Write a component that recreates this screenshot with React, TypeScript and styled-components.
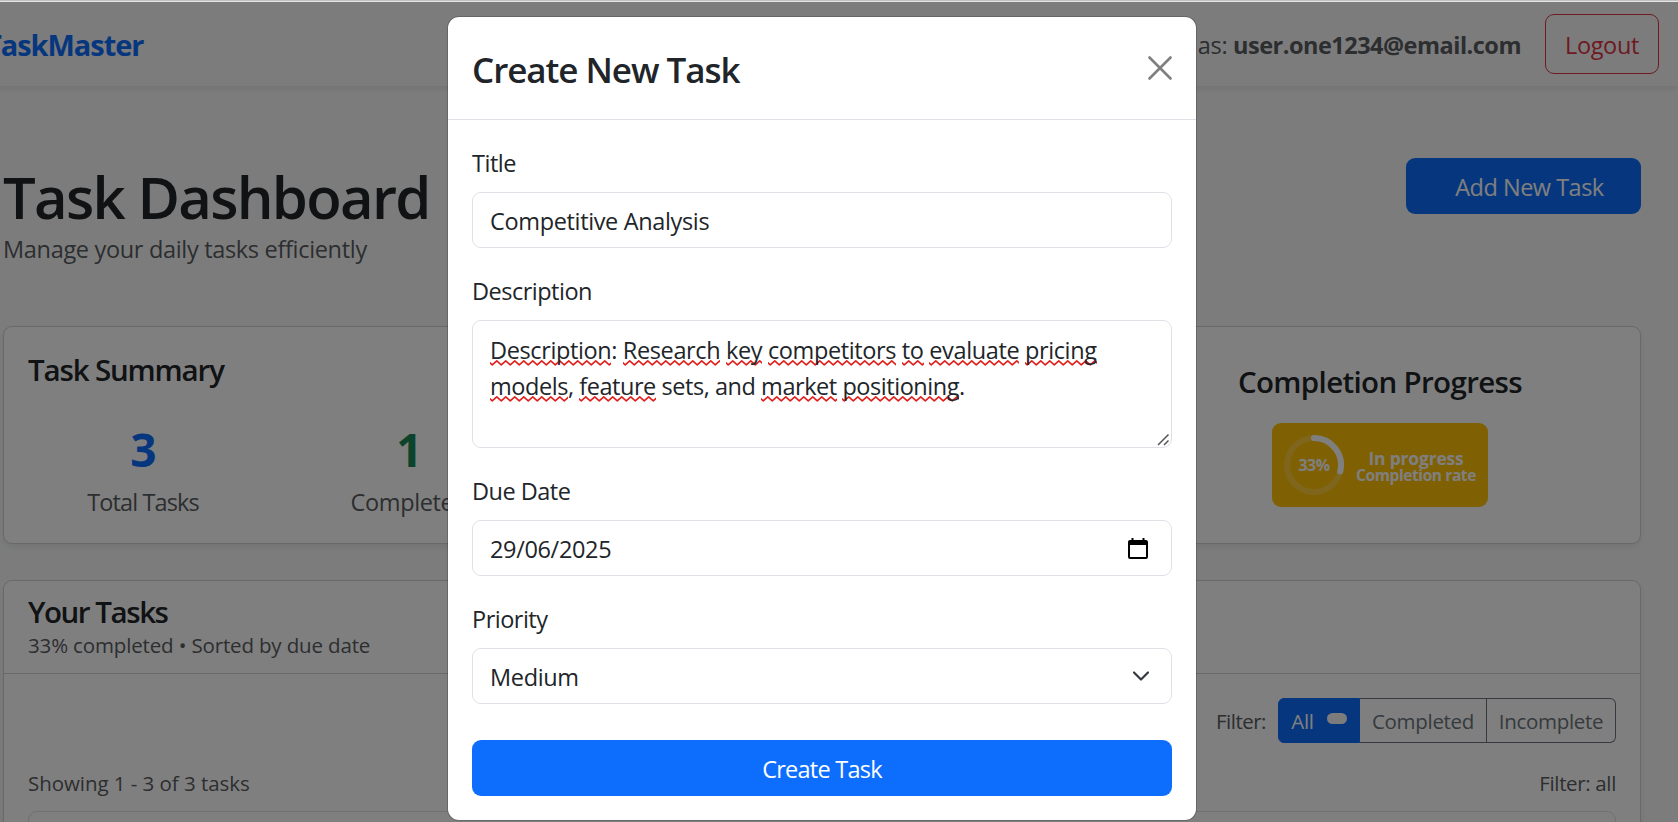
import React from "react";
import styled, { createGlobalStyle, css } from "styled-components";

const Global = createGlobalStyle`
  *, *::before, *::after { box-sizing: border-box; }
  html, body { margin: 0; padding: 0; height: 100%; overflow: hidden; }
  body {
    font-family: "Segoe UI", "Open Sans", "Noto Sans", sans-serif;
    font-size: 23.5px;
    line-height: 36px;
    letter-spacing: -0.35px;
    color: #212529;
    background: #f8f9fa;
  }
  h1, h2, h3, p { margin: 0; }
  button { font: inherit; letter-spacing: inherit; cursor: pointer; }
`;

const TopEdge = styled.div`
  height: 2px;
  background: #e6e6e6;
  border-top: 1px solid #c0c0c0;
`;

const Viewport = styled.div`
  position: relative;
  height: calc(100vh - 2px);
  overflow: hidden;
`;

const Page = styled.div`
  width: 1712px;
  margin-left: -34px;
`;

const Navbar = styled.header`
  display: flex;
  align-items: center;
  height: 84px;
  padding: 0 19px;
  background: #f8f9fa;
  box-shadow: 0 3px 6px rgba(0, 0, 0, 0.075);
`;

const Brand = styled.span`
  padding-top: 2px;
  font-size: 29px;
  font-weight: 700;
  letter-spacing: -1.05px;
  color: #0d6efd;
`;

const Account = styled.span`
  margin-left: auto;
  margin-right: 24px;
  padding-top: 2px;
  color: #595c5f;
  strong { font-weight: 700; letter-spacing: -0.5px; }
`;

const LogoutButton = styled.button`
  width: 114px;
  height: 60px;
  padding: 1px 0 0;
  border: 1.5px solid #dc3545;
  border-radius: 9px;
  background: transparent;
  color: #dc3545;
`;

const Container = styled.main`
  width: 1638px;
  margin: 0 auto;
  padding-top: 72px;
`;

const PageHeader = styled.div`
  display: flex;
  justify-content: space-between;
  align-items: flex-start;
  height: 168px;
`;

const PageTitle = styled.h1`
  padding-top: 3px;
  font-size: 58px;
  font-weight: 600;
  line-height: 72px;
  letter-spacing: -1.7px;
`;

const PageSubtitle = styled.p`
  margin-top: -2px;
  letter-spacing: -0.32px;
  color: #595c5f;
`;

const primary = css`
  border: 0;
  border-radius: 9px;
  background: #0d6efd;
  color: #fff;
`;

const AddButton = styled.button`
  ${primary}
  width: 235px;
  height: 56px;
  padding: 2px 0 0 12px;
  letter-spacing: -0.5px;
`;

const Card = styled.section`
  border: 1px solid #d2d3d4;
  border-radius: 9px;
  background: #fff;
  box-shadow: 0 3px 6px rgba(0, 0, 0, 0.075);
`;

const SummaryCard = styled(Card)`
  display: grid;
  grid-template-columns: 1076px 1fr;
  height: 218px;
  margin-bottom: 36px;
  padding-top: 24px;
`;

const CardTitle = styled.h2<{ $track?: number }>`
  height: 36px;
  font-size: 29.5px;
  font-weight: 600;
  line-height: 38px;
  letter-spacing: ${(p) => p.$track ?? -1}px;
`;

const Summary = styled.div`
  padding-left: 24px;
`;

const Stats = styled.div`
  display: grid;
  grid-template-columns: repeat(3, 266px);
  margin: 33px 0 0 -18px;
  text-align: center;
`;

const StatValue = styled.div<{ $color: string }>`
  font-size: 46px;
  font-weight: 700;
  line-height: 58px;
  letter-spacing: -1px;
  color: ${(p) => p.$color};
`;

const StatLabel = styled.div<{ $track?: number }>`
  margin-top: 6px;
  letter-spacing: ${(p) => p.$track ?? -0.35}px;
  color: #595c5f;
`;

const Progress = styled.div`
  display: flex;
  flex-direction: column;
  align-items: center;
  width: 600px;
  padding-top: 12px;
`;

const ProgressBadge = styled.div`
  display: flex;
  align-items: center;
  width: 216px;
  height: 84px;
  margin-top: 24px;
  padding: 0 12px;
  border-radius: 9px;
  background: #ffc107;
  color: #fff;
  font-weight: 700;
`;

const Ring = styled.div`
  display: grid;
  place-items: center;
  width: 60px;
  height: 60px;
  > * { grid-area: 1 / 1; }
  span { font-size: 16px; line-height: 20px; letter-spacing: -0.5px; }
`;

const RateText = styled.div`
  flex: 1;
  padding: 2px 0 0 12px;
  font-size: 17.5px;
  font-weight: 700;
  line-height: 17px;
  letter-spacing: -0.2px;
  text-align: center;
  white-space: nowrap;
  small { display: block; font-size: 15.5px; line-height: 16px; letter-spacing: -0.4px; }
`;

const TasksCard = styled(Card)`
  height: 400px;
`;

const TasksHeader = styled.div`
  height: 93px;
  padding: 12px 24px 0;
  border-bottom: 1px solid #d2d3d4;
`;

const Muted = styled.p<{ $track?: number }>`
  font-size: 20.5px;
  line-height: 32px;
  letter-spacing: ${(p) => p.$track ?? -0.15}px;
  color: #595c5f;
`;

const FilterRow = styled.div`
  display: flex;
  justify-content: flex-end;
  align-items: center;
  gap: 12px;
  padding: 24px 24px 0;
`;

const FilterGroup = styled.div`
  display: flex;
  height: 45px;
`;

const FilterButton = styled.button<{ $active?: boolean; $width: number }>`
  display: flex;
  align-items: center;
  justify-content: center;
  gap: 13px;
  width: ${(p) => p.$width}px;
  padding: 0;
  border: 1px solid ${(p) => (p.$active ? "#0d6efd" : "#6c757d")};
  border-left-width: ${(p) => (p.$active ? 1 : 0)}px;
  background: ${(p) => (p.$active ? "#0d6efd" : "transparent")};
  color: ${(p) => (p.$active ? "#fff" : "#6c757d")};
  font-size: 20.5px;
  letter-spacing: -0.3px;
  &:first-child { border-radius: 6px 0 0 6px; }
  &:last-child { border-radius: 0 6px 6px 0; }
`;

const Pill = styled.span`
  width: 20px;
  height: 11px;
  margin-top: -4px;
  border-radius: 6px;
  background: #f8f9fa;
`;

const ListInfo = styled.div`
  display: flex;
  justify-content: space-between;
  padding: 24px 24px 0;
`;

const TaskList = styled.div`
  height: 200px;
  margin: 12px 24px 0;
  border: 1px solid #dee2e6;
  border-radius: 9px;
`;

const Backdrop = styled.div`
  position: absolute;
  inset: 0 0 0 -34px;
  display: flex;
  justify-content: center;
  align-items: flex-start;
  padding-top: 14px;
  background: rgba(0, 0, 0, 0.5);
`;

const Dialog = styled.div`
  width: 750px;
  border: 1px solid rgba(0, 0, 0, 0.175);
  border-radius: 12px;
  background: #fff;
  background-clip: padding-box;
`;

const DialogHeader = styled.div`
  display: flex;
  justify-content: space-between;
  align-items: flex-start;
  height: 103px;
  padding: 26px 24px 0;
  border-bottom: 1px solid #dee2e6;
`;

const DialogTitle = styled.h2`
  font-size: 35px;
  font-weight: 600;
  line-height: 54px;
  letter-spacing: -1.05px;
`;

const CloseButton = styled.button`
  display: flex;
  margin-top: 13px;
  padding: 0;
  border: 0;
  background: none;
  color: #7f7f7f;
`;

const DialogBody = styled.form`
  display: flex;
  flex-direction: column;
  gap: 24px;
  padding: 24px;
`;

const Field = styled.div`
  display: flex;
  flex-direction: column;
  gap: 12px;
`;

const Label = styled.label`
  height: 36px;
  padding-top: 1px;
  letter-spacing: -0.5px;
`;

const Control = styled.div<{ $area?: boolean }>`
  position: relative;
  display: flex;
  justify-content: space-between;
  align-items: ${(p) => (p.$area ? "flex-start" : "center")};
  height: ${(p) => (p.$area ? 128 : 56)}px;
  padding: ${(p) => (p.$area ? "11px 17px 0" : "2px 22px 0 17px")};
  border: 1px solid #dee2e6;
  border-radius: 9px;
  background: #fff;
`;

const AreaText = styled.p<{ $track: number }>`
  letter-spacing: ${(p) => p.$track}px;
  white-space: nowrap;
`;

const squiggle =
  "%3Csvg xmlns='http://www.w3.org/2000/svg' width='9' height='6'%3E%3Cpath d='M-2.25.9L0 2.900L2.250 4.900L6.750.9L9 2.900L11.250 4.900' fill='none' stroke='%23e0201c' stroke-width='1.6' stroke-linejoin='round'/%3E%3C/svg%3E";

const Misspelt = styled.span`
  background: url("data:image/svg+xml,${squiggle}") repeat-x left bottom / 9px 6px;
`;

const ResizeHandle = styled.svg`
  position: absolute;
  right: 1px;
  bottom: 1px;
`;

const CreateButton = styled.button`
  ${primary}
  height: 56px;
  margin-top: 12px;
  padding: 2px 0 0;
  font-weight: 500;
  letter-spacing: -0.75px;
`;

const lines = [
  { text: "Description*: Research* key* competitors* to* evaluate* pricing*", track: -0.38 },
  { text: "models*, feature* sets, and market* positioning*.", track: -0.45 },
];

function Spellchecked({ line }: { line: string }) {
  return (
    <>
      {line.split(/([A-Za-z]+\*)/).map((part, i) =>
        part.endsWith("*") ? <Misspelt key={i}>{part.slice(0, -1)}</Misspelt> : part
      )}
    </>
  );
}

export default function App() {
  return (
    <>
      <Global />
      <TopEdge />
      <Viewport>
        <Page>
          <Navbar>
            <Brand>TaskMaster</Brand>
            <Account>
              Logged in as: <strong>user.one1234@email.com</strong>
            </Account>
            <LogoutButton>Logout</LogoutButton>
          </Navbar>
          <Container>
            <PageHeader>
              <div>
                <PageTitle>Task Dashboard</PageTitle>
                <PageSubtitle>Manage your daily tasks efficiently</PageSubtitle>
              </div>
              <AddButton>Add New Task</AddButton>
            </PageHeader>

            <SummaryCard>
              <Summary>
                <CardTitle $track={-1.15}>Task Summary</CardTitle>
                <Stats>
                  <div>
                    <StatValue $color="#0d6efd">3</StatValue>
                    <StatLabel $track={-0.9}>Total Tasks</StatLabel>
                  </div>
                  <div>
                    <StatValue $color="#198754">1</StatValue>
                    <StatLabel>Completed</StatLabel>
                  </div>
                </Stats>
              </Summary>
              <Progress>
                <CardTitle $track={-0.65}>Completion Progress</CardTitle>
                <ProgressBadge>
                  <Ring>
                    <svg width="60" height="60" viewBox="0 0 60 60" fill="none" strokeWidth="6">
                      <circle cx="30" cy="30" r="27" stroke="#fff" strokeOpacity="0.2" />
                      <path d="M30 3A27 27 0 0 1 56.2 36.5" stroke="#fff" strokeLinecap="round" />
                    </svg>
                    <span>33%</span>
                  </Ring>
                  <RateText>
                    In progress
                    <small>Completion rate</small>
                  </RateText>
                </ProgressBadge>
              </Progress>
            </SummaryCard>

            <TasksCard>
              <TasksHeader>
                <CardTitle $track={-1.45}>Your Tasks</CardTitle>
                <Muted>33% completed • Sorted by due date</Muted>
              </TasksHeader>
              <FilterRow>
                <Muted $track={-0.5}>Filter:</Muted>
                <FilterGroup>
                  <FilterButton $active $width={82}>
                    All <Pill />
                  </FilterButton>
                  <FilterButton $width={127}>Completed</FilterButton>
                  <FilterButton $width={129}>Incomplete</FilterButton>
                </FilterGroup>
              </FilterRow>
              <ListInfo>
                <Muted $track={-0.05}>Showing 1 - 3 of 3 tasks</Muted>
                <Muted $track={-0.35}>Filter: all</Muted>
              </ListInfo>
              <TaskList />
            </TasksCard>
          </Container>
        </Page>

        <Backdrop>
          <Dialog role="dialog" aria-label="Create New Task">
            <DialogHeader>
              <DialogTitle>Create New Task</DialogTitle>
              <CloseButton aria-label="Close">
                <svg width="24" height="24" viewBox="0 0 24 24" stroke="currentColor" strokeWidth="2.6" strokeLinecap="round">
                  <path d="M1.5 1.5l21 21M22.5 1.5l-21 21" />
                </svg>
              </CloseButton>
            </DialogHeader>
            <DialogBody>
              <Field>
                <Label>Title</Label>
                <Control>Competitive Analysis</Control>
              </Field>
              <Field>
                <Label>Description</Label>
                <Control $area>
                  <div>
                    {lines.map(({ text, track }) => (
                      <AreaText key={text} $track={track}>
                        <Spellchecked line={text} />
                      </AreaText>
                    ))}
                  </div>
                  <ResizeHandle width="13" height="13" viewBox="0 0 13 13" stroke="#555" strokeWidth="1.5">
                    <path d="M1 12L11.5 1.5M7 12l4.5-4.5" />
                  </ResizeHandle>
                </Control>
              </Field>
              <Field>
                <Label>Due Date</Label>
                <Control>
                  29/06/2025
                  <svg width="21" height="22" viewBox="0 0 20 22" preserveAspectRatio="xMinYMid">
                    <path d="M3.5 0h2v2h9V0h2v2H18a2 2 0 0 1 2 2v15a2 2 0 0 1-2 2H2a2 2 0 0 1-2-2V4a2 2 0 0 1 2-2h1.500zM2 7v12h16V7z" fill="#000" fillRule="evenodd" />
                  </svg>
                </Control>
              </Field>
              <Field>
                <Label>Priority</Label>
                <Control>
                  Medium
                  <svg width="16" height="12" viewBox="0 0 16 12" fill="none" stroke="#343a40" strokeWidth="2.2" strokeLinecap="round" strokeLinejoin="round">
                    <path d="M1 1.500l7 7 7-7" />
                  </svg>
                </Control>
              </Field>
              <CreateButton type="button">Create Task</CreateButton>
            </DialogBody>
          </Dialog>
        </Backdrop>
      </Viewport>
    </>
  );
}
